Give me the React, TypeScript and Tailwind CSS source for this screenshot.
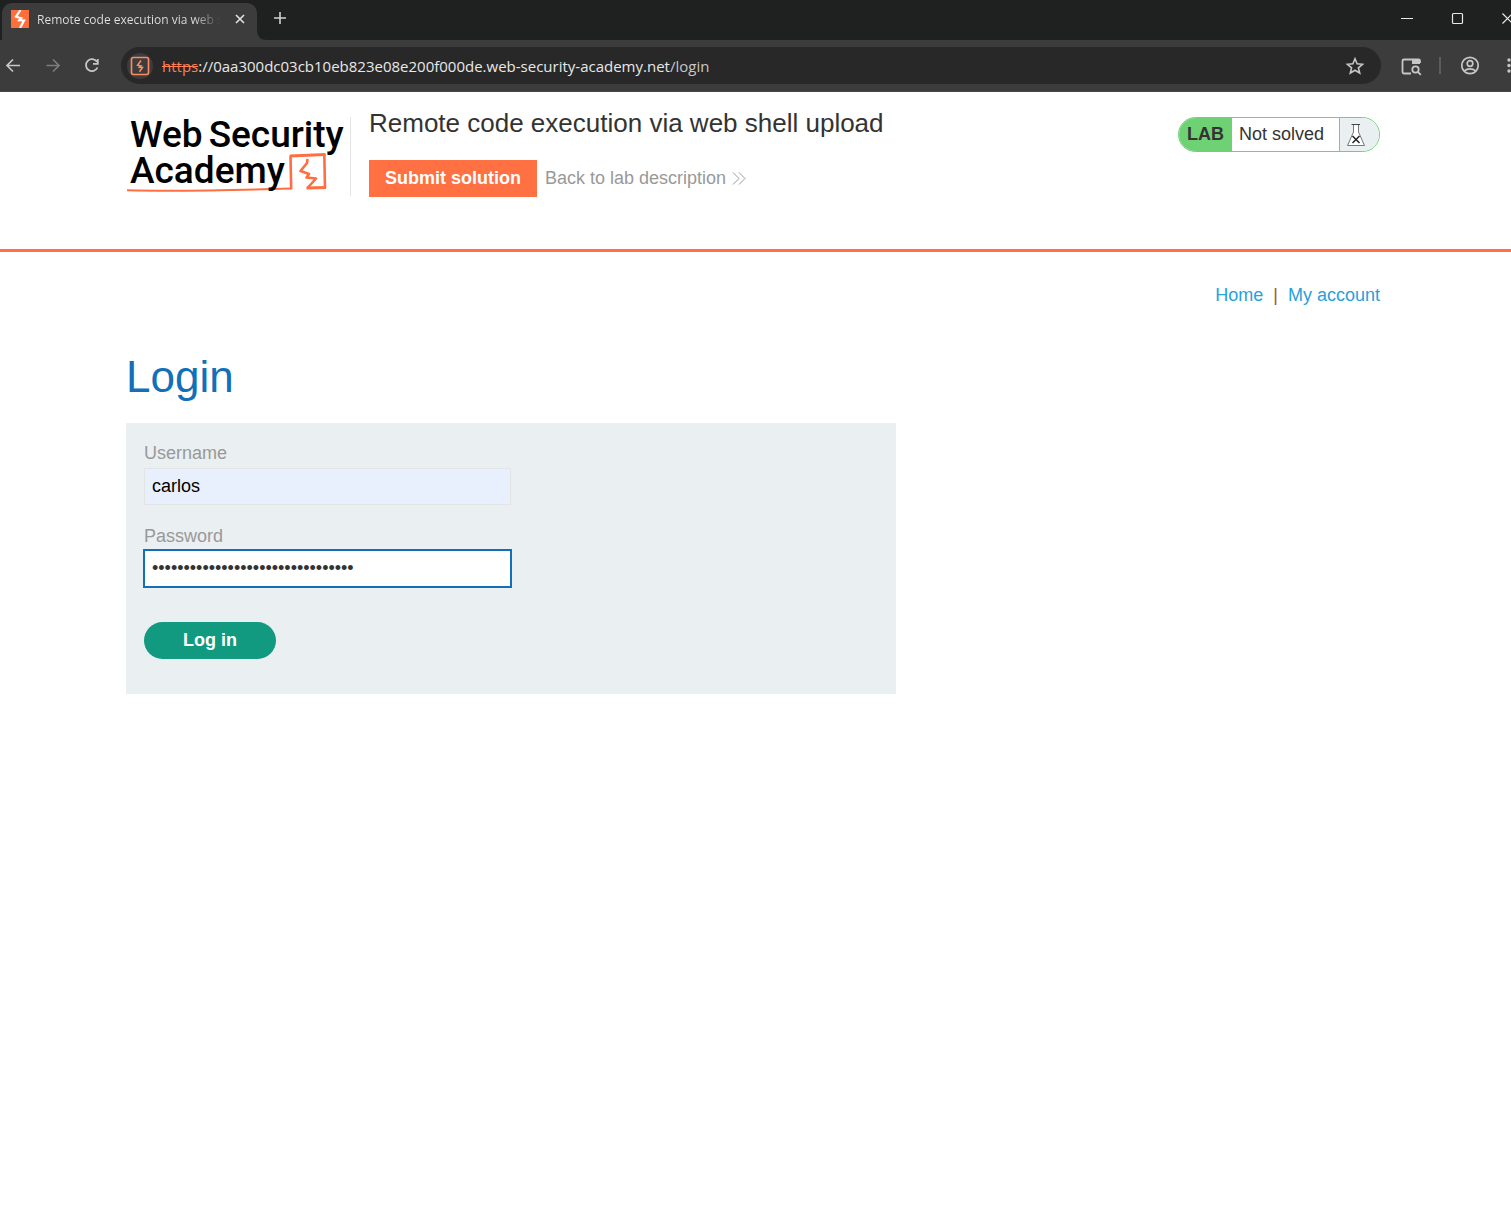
import type { ReactNode } from "react";

function Bolt({ className }: { className: string }) {
  return (
    <svg viewBox="0 0 18 18" className={className} aria-hidden="true">
      <rect width="18" height="18" fill="#ff6f3c" />
      <path d="M9.500 0L5 6.700L10.300 8.200L8.300 10.300L13 10.500L9 18" fill="none" stroke="#fff" strokeWidth="2.200" />
    </svg>
  );
}

function IconButton({ label, className, children }: { label: string; className: string; children: ReactNode }) {
  return (
    <button type="button" aria-label={label} className={`flex shrink-0 items-center justify-center ${className}`}>
      {children}
    </button>
  );
}

function TabStrip() {
  return (
    <div className="flex h-10 bg-[#1f2120] pl-0.5">
      <div className="relative mt-[3px] flex w-[255px] shrink-0 items-center rounded-t-[10px] bg-[#3c3c3c] pl-[9px] text-[#e3e3e3]">
        <Bolt className="mb-1.5 size-[18px] shrink-0" />
        <span className="mb-1 ml-2 w-[184px] overflow-hidden bg-linear-to-r from-[#e3e3e3] from-85% to-[#3c3c3c] bg-clip-text font-['Open_Sans',sans-serif] text-[12px] leading-5 whitespace-nowrap text-transparent">
          Remote code execution via web shell upload
        </span>
        <IconButton label="Close tab" className="mb-1.5 ml-[11px] size-4">
          <svg viewBox="0 0 16 16" className="size-4" fill="none" stroke="currentColor" strokeWidth="1.600">
            <path d="M4 4l8 8M12 4l-8 8" />
          </svg>
        </IconButton>
        <svg viewBox="0 0 10 10" className="absolute bottom-0 left-full size-[10px]" fill="#3c3c3c" aria-hidden="true">
          <path d="M0 0Q0 10 10 10H0Z" />
        </svg>
      </div>
      <IconButton label="New tab" className="mt-2 ml-[13px] size-5 text-[#d0d0d0]">
        <svg viewBox="0 0 20 20" className="size-5" fill="none" stroke="currentColor" strokeWidth="1.600">
          <path d="M10 4v12M4 10h12" />
        </svg>
      </IconButton>
      <div className="-mr-2 ml-auto flex gap-[26px] pt-1.5 text-[#e8e8e8]">
        <IconButton label="Minimize" className="size-6">
          <svg viewBox="0 0 24 24" className="size-6" fill="none" stroke="currentColor">
            <path d="M6 12.500h12" />
          </svg>
        </IconButton>
        <IconButton label="Maximize" className="size-6">
          <svg viewBox="0 0 24 24" className="size-6" fill="none" stroke="currentColor" strokeWidth="1.200">
            <rect x="7.500" y="7.500" width="10" height="10" rx="1" />
          </svg>
        </IconButton>
        <IconButton label="Close window" className="size-6">
          <svg viewBox="0 0 24 24" className="size-6 shrink-0" fill="none" stroke="currentColor" strokeWidth="1.200">
            <path d="M7.500 7.500l10 10M17.500 7.500l-10 10" />
          </svg>
        </IconButton>
      </div>
    </div>
  );
}

function Toolbar() {
  return (
    <div className="flex h-[52px] items-center border-b border-[#484848] bg-[#3c3c3c] text-[#c7c7c7]">
      <div className="flex gap-3.5">
        <IconButton label="Back" className="size-[26px]">
          <svg viewBox="0 0 26 26" className="size-[26px]" fill="none" stroke="currentColor" strokeWidth="1.700">
            <path d="M20 12.500H7.500M13 6.500l-6 6 6 6" />
          </svg>
        </IconButton>
        <IconButton label="Forward" className="size-[26px] text-[#7d7d7d]">
          <svg viewBox="0 0 26 26" className="size-[26px]" fill="none" stroke="currentColor" strokeWidth="1.700">
            <path d="M6.500 12.500H19M13 6.500l6 6-6 6" />
          </svg>
        </IconButton>
        <IconButton label="Reload" className="size-[26px]">
          <svg viewBox="0 0 26 26" className="size-[26px]" fill="none" stroke="currentColor" strokeWidth="1.800">
            <path d="M17 8.800A6 6 0 1 0 17.500 14.500M17.800 6v4.800H13" />
          </svg>
        </IconButton>
      </div>
      <div className="ml-[15px] flex h-[37px] min-w-0 flex-1 items-center rounded-full bg-[#282828] pr-3.5 pl-1.5">
        <span className="flex size-[26px] shrink-0 items-center justify-center rounded-full bg-[#3c3c3c]">
          <svg viewBox="0 0 20 20" className="size-5" fill="none" stroke="#ff8c60" strokeWidth="1.600" aria-hidden="true">
            <rect x="1.500" y="1.500" width="17" height="17" rx="2" />
            <path d="M11 4.500L7.500 9.300L11 10L9.500 11.300L12.500 11.500L9.500 15.800" strokeWidth="1.500" />
          </svg>
        </span>
        <div className="ml-[9px] min-w-0 flex-1 truncate font-['Open_Sans',sans-serif] text-[15px] leading-5 text-[#e8e8e8]">
          <span className="text-[#ff8055] line-through">https</span>
          ://0aa300dc03cb10eb823e08e200f000de.web-security-academy.net<span className="text-[#c7c7c7]">/login</span>
        </div>
        <IconButton label="Bookmark this page" className="size-6">
          <svg viewBox="0 0 24 24" className="size-6" fill="none" stroke="currentColor" strokeWidth="1.600">
            <path d="M12 4.800l2.100 5 5.400.5-4.100 3.500 1.300 5.200L12 16.200 7.300 19l1.300-5.200-4.100-3.500 5.400-.5z" />
          </svg>
        </IconButton>
      </div>
      <div className="-mr-[7px] ml-[18px] flex items-center">
        <IconButton label="Search tabs" className="size-6">
          <svg viewBox="0 0 24 24" className="size-6" fill="none" stroke="currentColor" strokeWidth="1.800">
            <path d="M12 19.500H5a1.500 1.500 0 0 1-1.500-1.500V7a1.500 1.500 0 0 1 1.500-1.500H19.500a1.500 1.500 0 0 1 1.500 1.500v2" />
            <path d="M13 5h8v5h-8z" fill="currentColor" stroke="none" />
            <circle cx="16.500" cy="15.500" r="3.200" />
            <path d="M18.800 17.800l3 3" />
          </svg>
        </IconButton>
        <span className="ml-4 h-[17px] w-0.5 bg-[#5c5c5c]" />
        <IconButton label="Profile" className="ml-[17px] size-6">
          <svg viewBox="0 0 24 24" className="size-6" fill="none" stroke="currentColor" strokeWidth="1.700">
            <circle cx="12" cy="11.500" r="8.200" />
            <circle cx="12" cy="9.500" r="2.800" />
            <path d="M6.300 16.800c3.200-2.600 8.200-2.600 11.400 0" />
          </svg>
        </IconButton>
        <IconButton label="Menu" className="ml-[18px] size-[18px]">
          <svg viewBox="0 0 18 18" className="size-[18px]" fill="currentColor">
            <circle cx="9" cy="3" r="1.700" />
            <circle cx="9" cy="8.500" r="1.700" />
            <circle cx="9" cy="14" r="1.700" />
          </svg>
        </IconButton>
      </div>
    </div>
  );
}

function AcademyLogo() {
  return (
    <a href="#academy" className="relative block h-[79px] w-[225px] shrink-0 border-r border-[#e4e4e4] font-['Roboto',sans-serif] text-[37px] leading-9 font-medium text-black">
      <svg viewBox="0 0 225 79" className="absolute inset-0 h-[79px] w-[225px]" fill="none" stroke="#ff6e40" strokeWidth="2.600" aria-hidden="true">
        <path d="M165.200 72.500L164.500 38.500" />
        <path d="M164 39L199.500 37.500" strokeWidth="3" />
        <path d="M198.300 37L199 71" strokeWidth="2.600" />
        <path d="M200 70.500L180.500 71" strokeWidth="3" />
        <path d="M181.500 42L181 46L174.500 54L183 57L180.500 60.500L190 61.500L181.500 71" strokeLinejoin="round" />
        <path d="M1 73.200C50 74.500 115 73 165 71.500" strokeWidth="2" />
      </svg>
      <span className="relative flex gap-1.5 pl-1 whitespace-nowrap">
        <span>Web</span>
        <span>Security</span>
      </span>
      <span className="relative block pl-1">Academy</span>
    </a>
  );
}

function LabHeader() {
  return (
    <header className="flex h-40 items-start border-b-[3px] border-[#ff7042] pr-[131px] pl-[126px]">
      <div className="pt-[25px]">
        <AcademyLogo />
      </div>
      <div className="ml-[18px] pt-4">
        <h2 className="text-[26px] leading-[30px] whitespace-nowrap text-[#333332]">Remote code execution via web shell upload</h2>
        <div className="mt-[22px] flex items-center gap-2">
          <button type="button" className="h-[37px] w-[168px] bg-[#ff7042] text-[18px] font-bold whitespace-nowrap text-white">
            Submit solution
          </button>
          <a href="#description" className="flex items-center gap-1.5 text-[18px] whitespace-nowrap text-[#999]">
            Back to lab description
            <svg viewBox="0 0 14 14" className="size-3.5" fill="none" stroke="#999" strokeWidth="1" aria-hidden="true">
              <path d="M1 0.500L7 6.500L1 12.500M7 0.500L13 6.500L7 12.500" />
            </svg>
          </a>
        </div>
      </div>
      <div className="mt-[25px] ml-auto flex h-[35px] w-[202px] shrink-0 overflow-hidden rounded-full border border-[#6ed174] text-[18px] text-[#333332]">
        <span className="flex w-[53px] items-center justify-center bg-[#6ed174] font-bold">LAB</span>
        <span className="flex flex-1 items-center pl-[7px] whitespace-nowrap">Not solved</span>
        <span className="flex w-10 items-center border-l border-[#6ed174] bg-[#eaeff2] pl-1.5">
          <svg viewBox="0 0 20 24" className="h-6 w-5" fill="none" aria-hidden="true">
            <path d="M7.500 1.500V9L1.500 22.500H18.500L12.500 9V1.500" fill="#fff" stroke="#777" />
            <path d="M5.500 1.500H14" stroke="#444" />
            <path d="M6.500 13L13.500 20M13.500 13L6.500 20" stroke="#222" strokeWidth="1.500" />
          </svg>
        </span>
      </div>
    </header>
  );
}

const fieldClass =
  "block h-[37px] w-[367px] max-w-full px-[7px] text-[18px] outline-none";

function LoginForm() {
  return (
    <form className="max-w-[770px] bg-[#eaeff2] px-[18px] pt-[18px] pb-[35px]" onSubmit={(e) => e.preventDefault()}>
      <label htmlFor="username" className="block text-[18px] leading-6 text-[#999]">Username</label>
      <input id="username" type="text" defaultValue="carlos" className={`${fieldClass} mt-[3px] mb-[19px] border border-[#e4e4e4] bg-[#e8f0fe] text-black`} />
      <label htmlFor="password" className="block text-[18px] leading-6 text-[#999]">Password</label>
      <input id="password" type="password" defaultValue="abcdefghijklmnopqrstuvwxyz012345" className={`${fieldClass} mt-0.5 border border-[#1370b8] bg-white text-[#333332] ring-1 ring-[#1370b8]`} />
      <button type="submit" className="mt-[35px] block h-[37px] w-[132px] rounded-full bg-[#119a80] text-[18px] font-bold text-white">
        Log in
      </button>
    </form>
  );
}

export default function App() {
  return (
    <div className="min-h-screen overflow-hidden bg-white font-['Liberation_Sans',Arial,sans-serif]">
      <TabStrip />
      <Toolbar />
      <LabHeader />
      <main className="pr-[131px] pl-[126px]">
        <nav className="flex justify-end gap-2.5 pt-[31px] text-[18px] leading-6 text-[#29a0dc]">
          <a href="#home">Home</a>
          <span className="text-[#a8552a]">|</span>
          <a href="#account">My account</a>
        </nav>
        <h1 className="mt-[45px] mb-[21px] text-[44px] leading-[50px] text-[#1370b8]">Login</h1>
        <LoginForm />
      </main>
    </div>
  );
}
